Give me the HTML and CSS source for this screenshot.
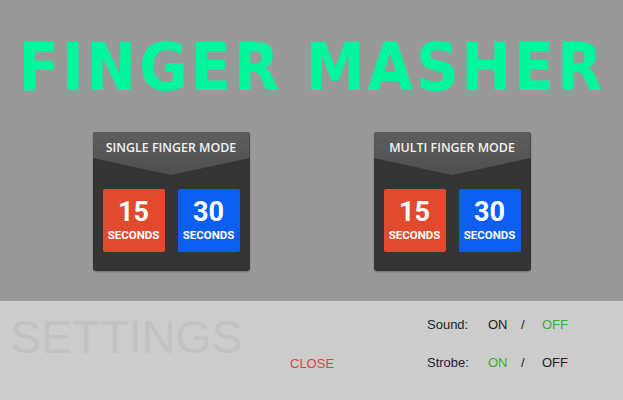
FILE: index.html
```html
<!DOCTYPE html>
<html>
<head>
<meta charset="utf-8">
<link rel="stylesheet" href="styles.css">
</head>
<body>
<div class="top">
  <h1 class="title">FINGER MASHER</h1>
  <div class="modes">
    <div class="card">
      <div class="card-head"><span>SINGLE FINGER MODE</span></div>
      <div class="btns">
        <div class="btn red"><span class="num">15</span><span class="unit">SECONDS</span></div>
        <div class="btn blue"><span class="num">30</span><span class="unit">SECONDS</span></div>
      </div>
    </div>
    <div class="card">
      <div class="card-head"><span>MULTI FINGER MODE</span></div>
      <div class="btns">
        <div class="btn red"><span class="num">15</span><span class="unit">SECONDS</span></div>
        <div class="btn blue"><span class="num">30</span><span class="unit">SECONDS</span></div>
      </div>
    </div>
  </div>
</div>
<div class="panel">
  <div class="settings-title">SETTINGS</div>
  <div class="close">CLOSE</div>
  <div class="options">
    <span class="lbl">Sound:</span><span>ON</span><span>/</span><span class="on">OFF</span>
    <span class="lbl">Strobe:</span><span class="on">ON</span><span>/</span><span>OFF</span>
  </div>
</div>
</body>
</html>
```
FILE: styles.css
```css
html, body {
  margin: 0;
  padding: 0;
}
body {
  width: 623px;
  height: 400px;
  overflow: hidden;
  background: #cdcdcd;
}
.top {
  height: 301px;
  background: #999999;
  padding-top: 35px;
  box-sizing: border-box;
}
.title {
  margin: 0;
  font-family: "DejaVu Sans Condensed", "DejaVu Sans", sans-serif;
  font-weight: bold;
  font-size: 66px;
  line-height: 66px;
  letter-spacing: 2.7px;
  color: #00f59c;
  text-align: center;
  padding-left: 1px;
}
.modes {
  display: flex;
  justify-content: center;
  gap: 124px;
  margin-top: 31px;
}
.card {
  width: 157px;
  height: 139px;
  background: #343434;
  border-radius: 3px;
  box-shadow: 0 1px 2px rgba(0,0,0,0.25);
  overflow: hidden;
}
.card-head {
  height: 43px;
  background: linear-gradient(#5e5e5e, #4e4e4e);
  clip-path: polygon(0 0, 100% 0, 100% 26px, 50% 100%, 0 26px);
  text-align: center;
}
.card-head span {
  display: block;
  padding-top: 8px;
  font-family: "Open Sans", sans-serif;
  font-weight: 600;
  font-size: 12.4px;
  line-height: 16px;
  color: #f2f2f2;
}
.btns {
  display: flex;
  gap: 13px;
  padding: 14px 10px 0 10px;
}
.btn {
  width: 62px;
  height: 63px;
  border-radius: 2px;
  display: flex;
  flex-direction: column;
  align-items: center;
  color: #ffffff;
  font-family: Roboto, "Open Sans", sans-serif;
  font-weight: bold;
}
.red { background: #e24a2f; }
.blue { background: #0c5ef2; }
.num {
  font-size: 27px;
  line-height: 27px;
  margin-top: 10px;
}
.unit {
  font-size: 11.5px;
  line-height: 12px;
  margin-top: 3px;
}
.panel {
  height: 99px;
  display: flex;
  align-items: flex-start;
  padding-left: 10px;
  font-family: "Liberation Sans", Arial, sans-serif;
}
.settings-title {
  width: 280px;
  margin-top: 13px;
  font-size: 46.5px;
  line-height: 46px;
  color: #c3c3c3;
}
.close {
  width: 137px;
  margin-top: 55px;
  font-size: 13px;
  line-height: 16px;
  color: #d24646;
}
.options {
  margin-top: 16px;
  display: grid;
  grid-template-columns: 61px 33px 21px auto;
  row-gap: 22px;
  font-size: 13px;
  line-height: 16px;
  color: #222222;
}
.options .on { color: #3aaa3a; }
```
